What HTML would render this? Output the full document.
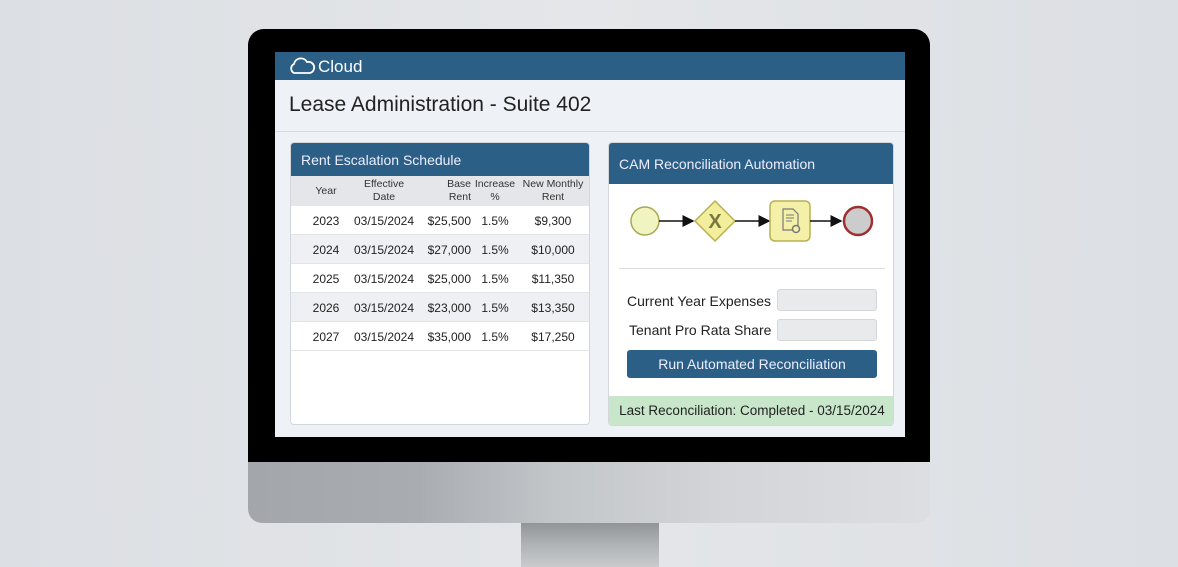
<!DOCTYPE html>
<html><head><meta charset="utf-8"><style>
*{margin:0;padding:0;box-sizing:border-box}
body{width:1178px;height:567px;overflow:hidden;background:linear-gradient(90deg,#dcdfe3,#e4e6e9 50%,#dcdfe3);font-family:"Liberation Sans",sans-serif;position:relative}
.abs{position:absolute}
.bezel{left:248px;top:29px;width:682px;height:440px;background:#000;border-radius:16px 16px 0 0}
.chin{left:248px;top:462px;width:682px;height:61px;background:linear-gradient(90deg,#a3a6aa,#a9acb0 25%,#c3c6c9 45%,#d3d5d8 70%,#dcdee1);border-radius:0 0 14px 14px}
.stand{left:521px;top:523px;width:138px;height:44px;background:linear-gradient(#929598,#b0b3b6 50%,#c9cbcd)}
.screen{left:275px;top:52px;width:630px;height:385px;background:#eef1f5}
.top{left:0;top:0;width:630px;height:28px;background:#2b5f86;color:#fff;font-size:17px}
.card{background:#fff;border:1px solid #d3d7dc;border-radius:4px;overflow:hidden}
.hdr{background:#2b5f86;color:#eef;font-size:14px}
.row{position:absolute;left:0;width:300px;height:29px;border-bottom:1px solid #e2e4e8;font-size:12px;color:#222}
.row span{position:absolute;top:8px;white-space:nowrap;text-align:center}
.th{position:absolute;left:0;top:33px;width:300px;height:30px;background:#e4e6ea;font-size:10.5px;color:#333;line-height:13px}
.th span{position:absolute;top:2px;text-align:center;white-space:nowrap}
.th span.one{top:9px}
.alt{background:#eef0f3}
.inp{background:#e9eaec;border:1px solid #d4d6d9;border-radius:3px;width:100px;height:22px}
.lbl{font-size:14px;color:#222}
</style></head><body>
<div class="abs bezel"></div>
<div class="abs chin"></div>
<div class="abs stand"></div>
<div class="abs screen">
 <div class="abs top">
  <svg class="abs" style="left:13px;top:5px" width="28" height="18" viewBox="0 0 28 18"><path d="M6 16 A5 5 0 0 1 6 7 A7 7 0 0 1 19 5 A5.5 5.5 0 0 1 22 16 Z" fill="none" stroke="#fff" stroke-width="1.8"/></svg>
  <span class="abs" style="left:43px;top:5px">Cloud</span>
 </div>
 <div class="abs" style="left:14px;top:41px;font-size:21px;color:#222">Lease Administration - Suite 402</div>
 <div class="abs" style="left:0;top:79px;width:630px;height:1px;background:#d5d9de"></div>
 <div class="abs card" style="left:15px;top:90px;width:300px;height:283px">
  <div class="hdr" style="height:33px;padding:9px 10px">Rent Escalation Schedule</div>
  <div class="th">
   <span class="one" style="left:15px;width:40px">Year</span>
   <span style="left:63px;width:60px">Effective<br>Date</span>
   <span style="left:140px;width:40px;text-align:right">Base<br>Rent</span>
   <span style="left:180px;width:48px">Increase<br>%</span>
   <span style="left:222px;width:80px">New Monthly<br>Rent</span>
  </div>
  <div class="row" style="top:63px"><span style="left:15px;width:40px">2023</span><span style="left:58px;width:70px">03/15/2024</span><span style="left:120px;width:60px;text-align:right">$25,500</span><span style="left:184px;width:40px">1.5%</span><span style="left:222px;width:80px">$9,300</span></div>
  <div class="row alt" style="top:92px"><span style="left:15px;width:40px">2024</span><span style="left:58px;width:70px">03/15/2024</span><span style="left:120px;width:60px;text-align:right">$27,000</span><span style="left:184px;width:40px">1.5%</span><span style="left:222px;width:80px">$10,000</span></div>
  <div class="row" style="top:121px"><span style="left:15px;width:40px">2025</span><span style="left:58px;width:70px">03/15/2024</span><span style="left:120px;width:60px;text-align:right">$25,000</span><span style="left:184px;width:40px">1.5%</span><span style="left:222px;width:80px">$11,350</span></div>
  <div class="row alt" style="top:150px"><span style="left:15px;width:40px">2026</span><span style="left:58px;width:70px">03/15/2024</span><span style="left:120px;width:60px;text-align:right">$23,000</span><span style="left:184px;width:40px">1.5%</span><span style="left:222px;width:80px">$13,350</span></div>
  <div class="row" style="top:179px"><span style="left:15px;width:40px">2027</span><span style="left:58px;width:70px">03/15/2024</span><span style="left:120px;width:60px;text-align:right">$35,000</span><span style="left:184px;width:40px">1.5%</span><span style="left:222px;width:80px">$17,250</span></div>
 </div>
 <div class="abs card" style="left:333px;top:90px;width:286px;height:284px">
  <div class="hdr" style="height:41px;padding:13px 10px">CAM Reconciliation Automation</div>
  <svg class="abs" style="left:0;top:41px" width="286" height="80" viewBox="0 0 286 80">
   <defs><marker id="a" markerWidth="8" markerHeight="8" refX="7" refY="4" orient="auto"><path d="M0 0L8 4L0 8Z" fill="#111"/></marker></defs>
   <circle cx="36" cy="37" r="14" fill="#f0f4c0" stroke="#a8a850" stroke-width="1.5"/>
   <line x1="50" y1="37" x2="84" y2="37" stroke="#111" stroke-width="1.5" marker-end="url(#a)"/>
   <path d="M106 17 L126 37 L106 57 L86 37Z" fill="#f3ee9c" stroke="#b8b050" stroke-width="1.5"/>
   <text x="106" y="44" font-size="20" font-weight="bold" fill="#7a7840" text-anchor="middle" font-family="Liberation Sans">X</text>
   <line x1="126" y1="37" x2="160" y2="37" stroke="#111" stroke-width="1.5" marker-end="url(#a)"/>
   <rect x="161" y="17" width="40" height="40" rx="5" fill="#f5f0a8" stroke="#b8b050" stroke-width="1.5"/>
   <path d="M174 25h10l5 5v16h-15z" fill="none" stroke="#777" stroke-width="1.2"/>
   <path d="M177 31h8M177 34h8M177 37h6" stroke="#777" stroke-width="1"/>
   <circle cx="187" cy="45" r="3.5" fill="#f5f0a8" stroke="#777" stroke-width="1.5"/>
   <line x1="201" y1="37" x2="232" y2="37" stroke="#111" stroke-width="1.5" marker-end="url(#a)"/>
   <circle cx="249" cy="37" r="14" fill="#ccc" stroke="#a03030" stroke-width="2.5"/>
  </svg>
  <div class="abs" style="left:10px;top:125px;width:266px;height:1px;background:#ddd"></div>
  <div class="abs lbl" style="left:18px;top:150px">Current Year Expenses</div>
  <div class="abs inp" style="left:168px;top:146px"></div>
  <div class="abs lbl" style="left:20px;top:179px">Tenant Pro Rata Share</div>
  <div class="abs inp" style="left:168px;top:176px"></div>
  <div class="abs" style="left:18px;top:207px;width:250px;height:28px;background:#2b5f86;border-radius:3px;color:#eef;font-size:14px;text-align:center;line-height:28px">Run Automated Reconciliation</div>
  <div class="abs" style="left:0;top:253px;width:286px;height:31px;background:#c8e6c9;font-size:13.5px;color:#222;text-align:center;line-height:30px">Last Reconciliation: Completed - 03/15/2024</div>
 </div>
</div>
</body></html>
